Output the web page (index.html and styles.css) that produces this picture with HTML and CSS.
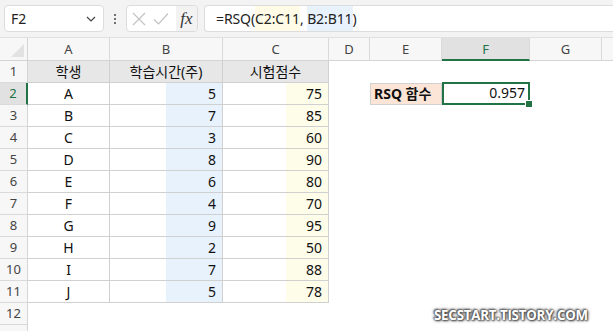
FILE: index.html
```html
<!DOCTYPE html>
<html lang="ko">
<head>
<meta charset="utf-8">
<link rel="stylesheet" href="styles.css">
</head>
<body>
<div class="app">
  <div class="toolbar">
    <div class="namebox">
      <span class="name">F2</span>
      <svg class="chev" width="10" height="6" viewBox="0 0 10 6"><path d="M1 1 L5 5 L9 1" fill="none" stroke="#444" stroke-width="1.2"/></svg>
    </div>
    <div class="dots"><i></i><i></i><i></i></div>
    <div class="fxbox">
      <svg class="ic" width="14" height="14" viewBox="0 0 14 14"><path d="M1 1 L13 13 M13 1 L1 13" stroke="#c2c2c2" stroke-width="1.2"/></svg>
      <svg class="ic" width="16" height="14" viewBox="0 0 16 14"><path d="M1 7.5 L5.5 12 L15 1.5" fill="none" stroke="#c2c2c2" stroke-width="1.2"/></svg>
      <span class="fx"><i>fx</i></span>
    </div>
    <div class="formula">=RSQ(<span class="hy">C2:C11</span>, <span class="hb">B2:B11</span>)</div>
  </div>
  <div class="sheet">
    <div class="corner"><span class="tri"></span></div>
    <div class="ch">A</div><div class="ch">B</div><div class="ch">C</div><div class="ch">D</div><div class="ch">E</div><div class="ch sel">F</div><div class="ch">G</div><div class="ch last"></div>

    <div class="rh">1</div><div class="c hd ca">학생</div><div class="c hd">학습시간(주)</div><div class="c hd">시험점수</div><div class="e"></div><div class="e"></div><div class="e"></div><div class="e"></div><div class="e"></div>
    <div class="rh rsel">2</div><div class="c ca">A</div><div class="c n cb">5</div><div class="c n cc">75</div><div class="e"></div><div class="e lbl">RSQ 함수</div><div class="e res">0.957<span class="handle"></span></div><div class="e"></div><div class="e"></div>
    <div class="rh">3</div><div class="c ca">B</div><div class="c n cb">7</div><div class="c n cc">85</div><div class="e"></div><div class="e"></div><div class="e"></div><div class="e"></div><div class="e"></div>
    <div class="rh">4</div><div class="c ca">C</div><div class="c n cb">3</div><div class="c n cc">60</div><div class="e"></div><div class="e"></div><div class="e"></div><div class="e"></div><div class="e"></div>
    <div class="rh">5</div><div class="c ca">D</div><div class="c n cb">8</div><div class="c n cc">90</div><div class="e"></div><div class="e"></div><div class="e"></div><div class="e"></div><div class="e"></div>
    <div class="rh">6</div><div class="c ca">E</div><div class="c n cb">6</div><div class="c n cc">80</div><div class="e"></div><div class="e"></div><div class="e"></div><div class="e"></div><div class="e"></div>
    <div class="rh">7</div><div class="c ca">F</div><div class="c n cb">4</div><div class="c n cc">70</div><div class="e"></div><div class="e"></div><div class="e"></div><div class="e"></div><div class="e"></div>
    <div class="rh">8</div><div class="c ca">G</div><div class="c n cb">9</div><div class="c n cc">95</div><div class="e"></div><div class="e"></div><div class="e"></div><div class="e"></div><div class="e"></div>
    <div class="rh">9</div><div class="c ca">H</div><div class="c n cb">2</div><div class="c n cc">50</div><div class="e"></div><div class="e"></div><div class="e"></div><div class="e"></div><div class="e"></div>
    <div class="rh">10</div><div class="c ca">I</div><div class="c n cb">7</div><div class="c n cc">88</div><div class="e"></div><div class="e"></div><div class="e"></div><div class="e"></div><div class="e"></div>
    <div class="rh">11</div><div class="c ca">J</div><div class="c n cb">5</div><div class="c n cc">78</div><div class="e"></div><div class="e"></div><div class="e"></div><div class="e"></div><div class="e"></div>
    <div class="rh">12</div><div class="e"></div><div class="e"></div><div class="e"></div><div class="e"></div><div class="e"></div><div class="e"></div><div class="e"></div><div class="e"></div>
    <div class="rh"></div><div class="e"></div><div class="e"></div><div class="e"></div><div class="e"></div><div class="e"></div><div class="e"></div><div class="e"></div><div class="e"></div>
  </div>
  <div class="wm">SECSTART.TISTORY.COM</div>
</div>
</body>
</html>
```

FILE: styles.css
```css
* { box-sizing: border-box; }
html, body { margin: 0; padding: 0; }
body {
  width: 613px; height: 331px; overflow: hidden;
  background: #fff;
  font-family: "Noto Sans", "Noto Sans CJK KR", sans-serif;
  color: #111;
}
.app { position: relative; width: 613px; height: 331px; overflow: hidden; }

.toolbar {
  height: 38px;
  background: #f3f3f3;
  border-bottom: 1px solid #e0e0e0;
  display: flex;
  align-items: flex-start;
  padding: 5px 0 0 4px;
}
.namebox {
  width: 100px; height: 27px;
  background: #fff;
  border: 1px solid #dcdcdc;
  border-radius: 4px;
  display: flex; align-items: center; justify-content: space-between;
  padding: 0 7px 0 6px;
}
.name { font-size: 14px; color: #222; }
.chev { margin-top: 1px; }
.dots {
  width: 22px; height: 27px;
  display: flex; flex-direction: column; align-items: center; justify-content: center; gap: 2px;
}
.dots i { display: block; width: 2px; height: 2px; background: #444; border-radius: 1px; }
.fxbox {
  width: 72px; height: 27px;
  background: #fff;
  border: 1px solid #dcdcdc;
  border-radius: 4px;
  display: flex; align-items: center;
  padding-left: 5px;
  gap: 7px;
  overflow: hidden;
}
.ic { flex: none; }
.fx {
  margin-left: auto;
  width: 24px; height: 100%;
  background: #f2f2f2;
  display: flex; align-items: center; justify-content: center;
  font-family: "Liberation Serif", serif;
  font-size: 17px; color: #333;
}
.formula {
  margin-left: 6px;
  flex: 1;
  height: 27px;
  background: #fff;
  border: 1px solid #dcdcdc;
  border-right: none;
  border-radius: 4px 0 0 4px;
  padding-left: 11px;
  font-size: 14px;
  letter-spacing: -0.1px;
  line-height: 25px;
  color: #222;
  white-space: nowrap;
}
.hy { background: #fffbe6; padding: 3px 0; }
.hb { background: #e8f2fc; padding: 3px 0; }

.sheet {
  display: grid;
  grid-template-columns: 28px 82px 113px 106px 41px 72px 88px 72px 11px;
  grid-template-rows: 23px repeat(13, 22px);
  font-size: 14px;
}
.corner {
  position: relative;
  background: #f7f7f7;
  border-right: 1px solid #d4d4d4;
  border-bottom: 1px solid #d4d4d4;
}
.tri {
  position: absolute; right: 3px; bottom: 3px;
  width: 0; height: 0;
  border-left: 13px solid transparent;
  border-bottom: 13px solid #e2e2e2;
}
.ch {
  background: #f7f7f7;
  border-right: 1px solid #dadada;
  border-bottom: 1px solid #d4d4d4;
  text-align: center;
  font-size: 13px; line-height: 22px; color: #444;
}
.ch.last { border-right: none; }
.ch.sel {
  background: #e1e1e1;
  color: #217346;
  border-bottom: 2px solid #217346;
}
.rh {
  background: #f7f7f7;
  border-right: 1px solid #d4d4d4;
  border-bottom: 1px solid #dadada;
  text-align: center;
  font-size: 13px; line-height: 21px; color: #444;
}
.rh.rsel {
  background: #e1e1e1;
  color: #217346;
  border-right: 2px solid #217346;
}
.c {
  border-right: 1px solid #d0d0d0;
  border-bottom: 1px solid #d0d0d0;
  line-height: 21px;
  text-align: center;
  white-space: nowrap;
}
.hd { background: #e7e7e7; }
.n { text-align: right; padding-right: 6px; }
.cb { background: linear-gradient(to right, transparent 56px, #e8f2fc 56px); }
.cc { background: linear-gradient(to right, transparent 63px, #fefde9 63px); }
.lbl {
  background: #fce4d6;
  border: 1px solid #d0d0d0;
  font-weight: bold;
  line-height: 20px;
  padding-left: 3px;
  white-space: nowrap;
}
.res {
  position: relative;
  border: 2px solid #217346;
  text-align: right;
  padding-right: 3px;
  line-height: 18px;
  margin-top: -1px;
  height: 23px;
}
.handle {
  position: absolute; right: -4px; bottom: -4px;
  width: 6px; height: 6px;
  background: #217346;
  outline: 1px solid #fff;
}
.wm {
  position: absolute; left: 434px; top: 306px;
  font-family: "Open Sans", "Noto Sans", sans-serif;
  font-weight: 700; font-size: 13.3px;
  color: #fff;
  letter-spacing: -0.2px;
  text-shadow: 0 0 1px #555, 0 0 2px #555, 1px 1px 2px #444, -1px -1px 2px #555, 0 0 4px #888;
}
```
